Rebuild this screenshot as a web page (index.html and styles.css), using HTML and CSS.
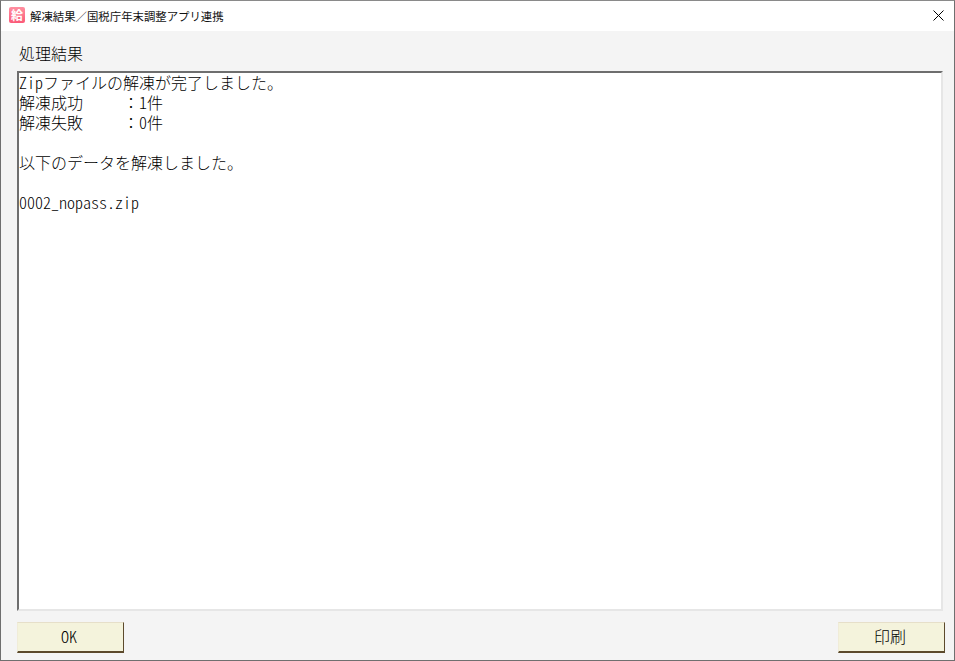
FILE: index.html
```html
<!DOCTYPE html>
<html lang="ja">
<head>
<meta charset="utf-8">
<title>解凍結果/国税庁年末調整アプリ連携</title>
<link rel="stylesheet" href="styles.css">
</head>
<body>
<div class="window">
  <header class="titlebar">
    <span class="app-icon">給</span>
    <span class="title">解凍結果&#xFF0F;国税庁年末調整アプリ連携</span>
    <svg class="close" viewBox="0 0 11 11" width="11" height="11"><path d="M.5.5l10 10M10.5.5l-10 10" stroke="#000" stroke-width="1" fill="none"/></svg>
  </header>
  <main class="content">
    <div class="label">処理結果</div>
    <div class="result"><div class="line"><span class="half">Zip</span>ファイルの解凍が完了しました。</div><div class="line">解凍成功<span class="half">     </span>&#xFF1A;<span class="half">1</span>件</div><div class="line">解凍失敗<span class="half">     </span>&#xFF1A;<span class="half">0</span>件</div><div class="line"></div><div class="line">以下のデータを解凍しました。</div><div class="line"></div><div class="line half">0002_nopass.zip</div></div>
    <div class="actions">
      <button class="btn"><span class="half">OK</span></button>
      <button class="btn">印刷</button>
    </div>
  </main>
</div>
</body>
</html>
```
FILE: styles.css
```css
* { box-sizing: border-box; }
html, body { margin: 0; padding: 0; }
body { width: 955px; height: 661px; overflow: hidden; font-family: "Noto Sans CJK JP", "Liberation Sans", sans-serif; color: #000; }
.window { width: 955px; height: 661px; border: 1px solid #6f6f6f; border-top-color: #8a8a8a; display: flex; flex-direction: column; background: #f4f4f4; }
.titlebar { height: 30px; flex: none; background: #fff; display: flex; align-items: center; padding: 0 10px 2px 8px; }
.app-icon { width: 16px; height: 16px; flex: none; border-radius: 2px; background: linear-gradient(#ff8fa0, #fb5a78); color: #fff; font-size: 12px; line-height: 15px; text-align: center; font-weight: 700; }
.title { margin: 1px 0 0 5px; font-size: 11.4px; line-height: 16px; flex: 1; white-space: nowrap; color: #111; }
.close { flex: none; }
.content { flex: 1; display: flex; flex-direction: column; padding: 0 9px 7px 16px; min-height: 0; }
.label { font-size: 16px; line-height: 20px; margin: 12px 0 0 2px; height: 28px; font-weight: 300; }
.result { flex: 1; background: #fff; margin-right: 2px; border-style: solid; border-width: 2px; border-color: #6e6e6e #e6e6e6 #e6e6e6 #6e6e6e; padding: 0; font-size: 16px; line-height: 20px; font-weight: 300; white-space: pre; overflow: hidden; }
.line { height: 20px; line-height: 20px; position: relative; top: -1px; }
.half { font-feature-settings: "hwid"; }
.actions { flex: none; display: flex; justify-content: space-between; margin-top: 11px; }
.btn { width: 107px; height: 31px; padding: 0 3px 2px 0; background: #f4f3dc; border-style: solid; border-width: 1px 1px 2px 1px; border-color: #e6dfc9 #5c4a2c #5c4a2c #f0ecd8; font-family: "Noto Sans CJK JP", sans-serif; font-size: 16px; font-weight: 300; color: #000; line-height: 20px; }
```
